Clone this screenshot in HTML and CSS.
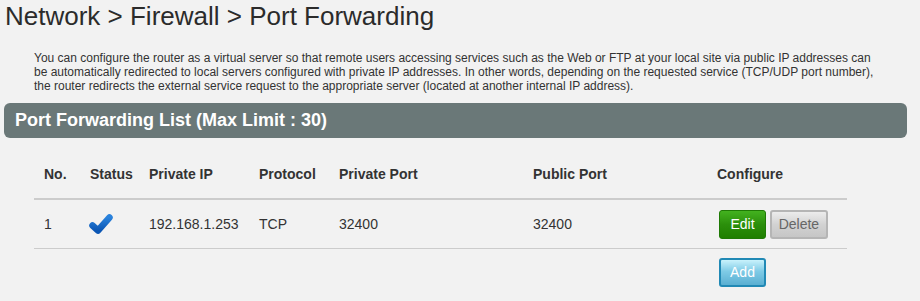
FILE: index.html
```html
<!DOCTYPE html>
<html>
<head>
  <meta charset="UTF-8" />
  <title>Port Forwarding</title>
  <link rel="stylesheet" href="styles.css">
</head>
<body>
  <h1 class="page-title">Network &gt; Firewall &gt; Port Forwarding</h1>

  <p class="intro">
    You can configure the router as a virtual server so that remote users accessing services such as the Web or FTP at your local site via public IP addresses can
    be automatically redirected to local servers configured with private IP addresses. In other words, depending on the requested service (TCP/UDP port number),
    the router redirects the external service request to the appropriate server (located at another internal IP address).
  </p>

  <div class="section-bar">Port Forwarding List (Max Limit : 30)</div>

  <table class="pf-table">
    <thead>
      <tr>
        <th class="col-no">No.</th>
        <th class="col-status">Status</th>
        <th class="col-ip">Private IP</th>
        <th class="col-proto">Protocol</th>
        <th class="col-priv">Private Port</th>
        <th class="col-pub">Public Port</th>
        <th class="col-conf">Configure</th>
      </tr>
    </thead>
    <tbody>
      <tr class="data-row">
        <td>1</td>
        <td>
          <svg class="check" width="24" height="20" viewBox="0 0 24 20">
            <defs>
              <linearGradient id="chk" x1="0" y1="0" x2="0" y2="1">
                <stop offset="0" stop-color="#2a82dc" />
                <stop offset="1" stop-color="#0b56b4" />
              </linearGradient>
            </defs>
            <polyline points="3.5,11.5 9,16.5 20.5,3.5" fill="none" stroke="url(#chk)" stroke-width="6.5" stroke-linecap="round" stroke-linejoin="round" />
          </svg>
        </td>
        <td>192.168.1.253</td>
        <td>TCP</td>
        <td>32400</td>
        <td>32400</td>
        <td>
          <button class="btn btn-edit">Edit</button>
          <button class="btn btn-delete">Delete</button>
        </td>
      </tr>
      <tr class="add-row">
        <td colspan="6"></td>
        <td><button class="btn btn-add">Add</button></td>
      </tr>
    </tbody>
  </table>
</body>
</html>
```

FILE: styles.css
```css
body {
  margin: 0;
  padding: 0;
  background: #f2f2f2;
  color: #333;
  font-family: "Liberation Sans", Arial, sans-serif;
}

.page-title {
  margin: 0;
  padding: 0 0 0 5px;
  font-size: 26px;
  font-weight: normal;
  line-height: 32px;
  color: #2b2b2b;
}

.intro {
  margin: 19px 0 0 34px;
  width: 845px;
  font-size: 12px;
  line-height: 14px;
  color: #333;
}

.section-bar {
  margin: 10px 13px 0 4px;
  height: 35px;
  line-height: 35px;
  padding-left: 11px;
  background: #6a7878;
  border-radius: 6px;
  color: #fff;
  font-size: 18px;
  font-weight: bold;
}

.pf-table {
  margin: 12px 0 0 34px;
  width: 813px;
  border-collapse: collapse;
  table-layout: fixed;
  font-size: 14px;
}

.pf-table th,
.pf-table td {
  text-align: left;
  padding: 0 0 0 10px;
  white-space: nowrap;
}

.pf-table th {
  height: 48px;
  font-weight: bold;
  color: #333;
  border-bottom: 2px solid #ccc;
}

.col-no { width: 36px; }
.col-status { width: 49px; }
.col-ip { width: 100px; }
.col-proto { width: 70px; }
.col-priv { width: 184px; }
.col-pub { width: 174px; }
.col-conf { width: 130px; }

.data-row td {
  height: 48px;
  border-bottom: 1px solid #ccc;
  color: #333;
}

.check {
  display: block;
  margin-left: -1px;
}

.add-row td {
  height: 46px;
}

.btn {
  height: 29px;
  padding: 0;
  border-radius: 3px;
  font-family: "Liberation Sans", Arial, sans-serif;
  font-size: 14px;
  vertical-align: middle;
  cursor: pointer;
}

.btn-edit {
  width: 47px;
  margin-left: 2px;
  color: #fff;
  border: 1px solid #1f7a05;
  background: linear-gradient(#43b21f, #2b8f0b 50%, #1f7f00);
}

.btn-delete {
  width: 58px;
  margin-left: 0;
  color: #666;
  border: 2px solid #b5b5b5;
  background: linear-gradient(#ececec, #d2d2d2 50%, #c6c6c6);
}

.btn-add {
  width: 47px;
  margin-left: 2px;
  color: #fff;
  border: 2px solid #2189b5;
  background: linear-gradient(#c9f2fc, #7fcbe6 45%, #5aafd2);
}
```
